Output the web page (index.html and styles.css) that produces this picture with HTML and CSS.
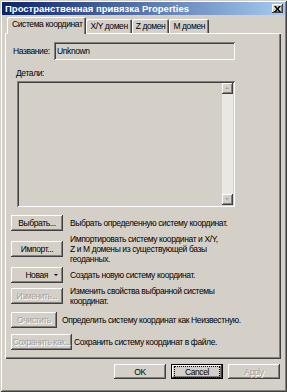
FILE: index.html
```html
<!DOCTYPE html>
<html lang="ru">
<head>
    <meta charset="UTF-8">
    <title>Пространственная привязка Properties</title>
    <link rel="stylesheet" href="styles.css">
</head>
<body>
    <div class="window">
        <div class="titlebar">
            <span class="title">Пространственная привязка Properties</span>
            <span class="close">
                <svg width="7" height="6" viewBox="0 0 7 6"><path d="M0 0h2l1.5 2 1.5-2h2l-2.5 3 2.5 3h-2l-1.5-2-1.5 2h-2l2.5-3z" fill="#000"/></svg>
            </span>
        </div>

        <div class="tabs">
            <div class="tab active">Система координат</div>
            <div class="tab">X/Y домен</div>
            <div class="tab">Z домен</div>
            <div class="tab">M домен</div>
        </div>

        <div class="panel">
            <div class="name-row">
                <span class="label">Название:</span>
                <div class="field">Unknown</div>
            </div>

            <div class="details-label">Детали:</div>
            <div class="details">
                <div class="scrollbar">
                    <div class="arrow up"></div>
                    <div class="track"></div>
                    <div class="arrow down"></div>
                </div>
            </div>

            <div class="actions">
                <div class="action">
                    <button class="btn">Выбрать...</button>
                    <p>Выбрать определенную систему координат.</p>
                </div>
                <div class="action">
                    <button class="btn">Импорт...</button>
                    <p>Импортировать систему координат и X/Y,<br>Z и M домены из существующей базы<br>геоданных.</p>
                </div>
                <div class="action">
                    <button class="btn split"><span>Новая</span><span class="caret"></span></button>
                    <p>Создать новую систему координат.</p>
                </div>
                <div class="action">
                    <button class="btn" disabled>Изменить...</button>
                    <p>Изменить свойства выбранной системы<br>координат.</p>
                </div>
                <div class="action spaced">
                    <button class="btn narrow" disabled>Очистить</button>
                    <p>Определить систему координат как Неизвестную.</p>
                </div>
                <div class="action spaced">
                    <button class="btn wide" disabled>Сохранить как...</button>
                    <p>Сохранить систему координат в файле.</p>
                </div>
            </div>
        </div>

        <div class="footer">
            <button class="btn">OK</button>
            <button class="btn default"><span class="focus">Cancel</span></button>
            <button class="btn" disabled>Apply</button>
        </div>
    </div>
</body>
</html>
```

FILE: styles.css
```css
body {
    margin: 0;
    background: #fff;
    font-family: "Liberation Sans", Arial, sans-serif;
    font-size: 8.5px;
    letter-spacing: -0.4px;
    color: #000;
}

.window {
    width: 287px;
    height: 392px;
    box-sizing: border-box;
    padding: 2px 0 0 2px;
    background: #d4d0c8;
    box-shadow: inset 1px 1px #d4d0c8, inset -1px -1px #404040, inset 2px 2px #fff, inset -2px -2px #808080;
    display: flex;
    flex-direction: column;
}

/* заголовок окна */
.titlebar {
    height: 13px;
    margin-right: 2px;
    display: flex;
    align-items: center;
    justify-content: space-between;
    padding: 0 2px 0 3px;
    background: linear-gradient(to right, #0a246a, #a6caf0);
}

.title {
    color: #fff;
    font-weight: bold;
    font-size: 9.5px;
    letter-spacing: 0;
}

.close {
    width: 11px;
    height: 9px;
    display: flex;
    align-items: center;
    justify-content: center;
    background: #d4d0c8;
    box-shadow: inset -1px -1px #404040, inset 1px 1px #fff, inset -2px -2px #808080;
}

/* вкладки */
.tabs {
    display: flex;
    align-items: flex-end;
    margin: 2px 0 0 5px;
    height: 16px;
    position: relative;
    z-index: 1;
}

.tab {
    height: 14px;
    line-height: 14px;
    padding: 0 4px;
    box-sizing: border-box;
    border-radius: 2px 2px 0 0;
    box-shadow: inset 1px 1px #fff, inset -1px 0 #404040, inset -2px 0 #808080;
    white-space: nowrap;
}

.tab.active {
    height: 17px;
    line-height: 15px;
    padding: 0 4px 0 5px;
    margin-bottom: -1px;
    background: #d4d0c8;
}

.panel {
    height: 326px;
    margin: 0 6px 0 3px;
    box-sizing: border-box;
    padding: 9px 0 0 6px;
    box-shadow: inset 1px 1px #fff, inset -1px -1px #404040, inset -2px -2px #808080;
    display: flex;
    flex-direction: column;
}

.name-row {
    display: flex;
    align-items: center;
    padding-left: 2px;
}

.label {
    width: 41px;
}

.field {
    width: 181px;
    height: 18px;
    line-height: 18px;
    box-sizing: border-box;
    padding-left: 3px;
    box-shadow: inset 1px 1px #808080, inset -1px -1px #fff, inset 2px 2px #404040, inset -2px -2px #d4d0c8;
}

.details-label {
    margin: 8px 0 0 5px;
}

.details {
    width: 218px;
    height: 126px;
    margin: 3px 0 0 6px;
    box-sizing: border-box;
    padding: 2px;
    display: flex;
    justify-content: flex-end;
    box-shadow: inset 1px 1px #808080, inset -1px -1px #fff, inset 2px 2px #404040, inset -2px -2px #d4d0c8;
}

.scrollbar {
    width: 11px;
    display: flex;
    flex-direction: column;
    background: #eae8e3;
}

.track {
    flex: 1;
}

.arrow {
    height: 11px;
    background: #d4d0c8;
    box-shadow: inset -1px -1px #404040, inset 1px 1px #fff, inset -2px -2px #808080;
    position: relative;
}

.arrow::after {
    content: "";
    position: absolute;
    left: 3px;
    top: 4px;
    border-left: 2px solid transparent;
    border-right: 2px solid transparent;
}

.arrow.up::after {
    border-bottom: 2px solid #a0a0a0;
}

.arrow.down::after {
    border-top: 2px solid #a0a0a0;
}

/* кнопки действий */
.actions {
    margin-top: 8px;
    display: flex;
    flex-direction: column;
    gap: 3px;
}

.action {
    display: flex;
    align-items: center;
    gap: 7px;
}

.action.spaced {
    margin-top: 3px;
}

.action p {
    margin: 0;
    line-height: 10px;
    white-space: nowrap;
}

.btn {
    width: 52px;
    height: 16px;
    padding: 0;
    border: none;
    flex-shrink: 0;
    background: #d4d0c8;
    font: inherit;
    letter-spacing: inherit;
    color: #000;
    white-space: nowrap;
    box-shadow: inset -1px -1px #404040, inset 1px 1px #fff, inset -2px -2px #808080;
}

.btn:disabled {
    color: #a0a0a0;
    text-shadow: 1px 1px #fff;
}

.btn.narrow {
    width: 46px;
    margin-right: -2px;
}

.btn.wide {
    width: 61px;
    margin-right: -5px;
}

.btn.split {
    display: flex;
    align-items: center;
    justify-content: flex-end;
    padding-right: 5px;
    gap: 6px;
}

.caret {
    border-left: 2px solid transparent;
    border-right: 2px solid transparent;
    border-top: 2px solid #000;
}

.footer {
    display: flex;
    justify-content: flex-end;
    gap: 5px;
    margin: 5px 7px 0 0;
}

.footer .btn {
    height: 15px;
}

.btn.default {
    box-shadow: inset 0 0 0 1px #000, inset -2px -2px #404040, inset 2px 2px #fff, inset -3px -3px #808080;
}

.focus {
    outline: 1px dotted #000;
    padding: 0 10px;
}
```
